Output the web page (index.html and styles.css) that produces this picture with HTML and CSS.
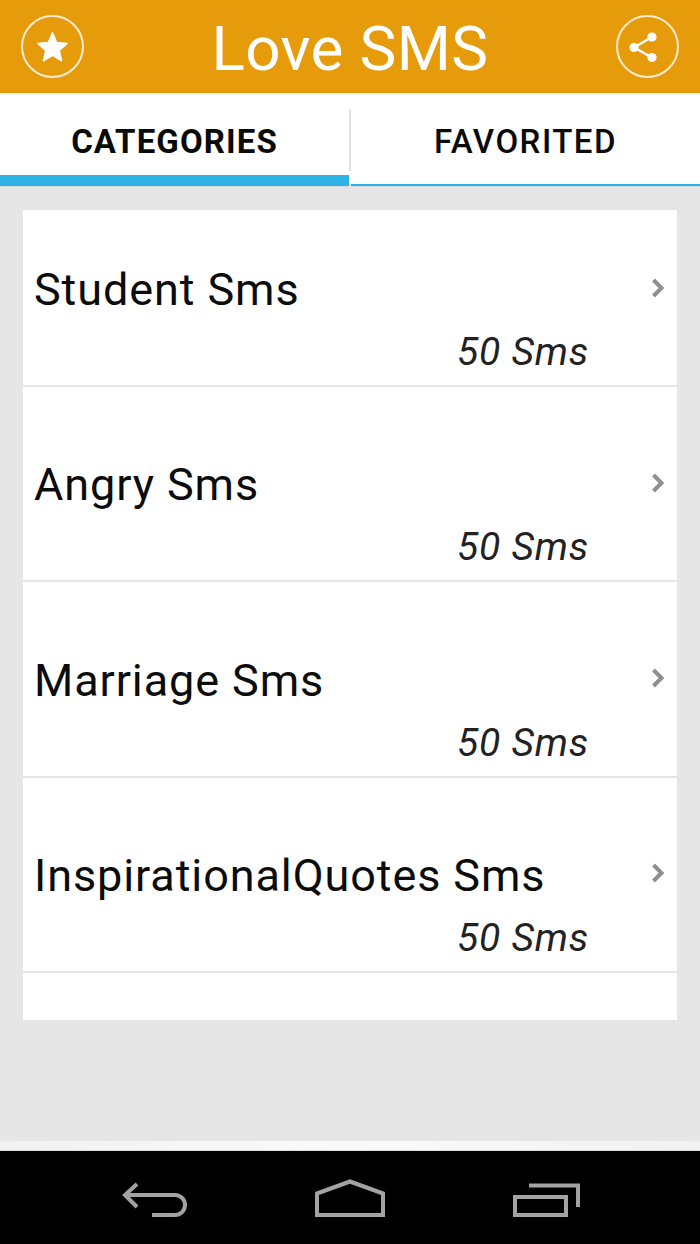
FILE: index.html
```html
<!DOCTYPE html>
<html lang="en">
<head>
<meta charset="utf-8">
<title>Love SMS</title>
<link rel="stylesheet" href="styles.css">
</head>
<body>
<div class="app">
  <header class="header">
    <button class="round-btn" aria-label="Favorites">
      <svg viewBox="0 0 63 63" width="63" height="63"><circle cx="31.500" cy="31.500" r="30.500" fill="none" stroke="#fbeccf" stroke-width="2"/><path d="M31.500 17.800L35.700 27.500 46.200 28.500 38.300 35.500 40.600 45.800 31.500 40.500 22.400 45.800 24.700 35.500 16.800 28.500 27.300 27.500z" fill="#fff" stroke="#fff" stroke-width="1.400" stroke-linejoin="round"/></svg>
    </button>
    <h1 class="title">Love SMS</h1>
    <button class="round-btn" aria-label="Share">
      <svg viewBox="0 0 63 63" width="63" height="63"><circle cx="31.500" cy="31.500" r="30.500" fill="none" stroke="#fbeccf" stroke-width="2"/><path d="M36 22 L18 32.500 L36 42.500" fill="none" stroke="#fff" stroke-width="2.500"/><circle cx="36" cy="22" r="4.600" fill="#fff"/><circle cx="18" cy="32.500" r="4.600" fill="#fff"/><circle cx="36" cy="42.500" r="4.600" fill="#fff"/></svg>
    </button>
  </header>
  <nav class="tabs">
    <div class="tab tab-active"><span>CATEGORIES</span></div>
    <div class="tab-sep"></div>
    <div class="tab"><span>FAVORITED</span></div>
  </nav>
  <main class="content">
    <ul class="card">
      <li class="row"><div class="row-top"><span class="row-title">Student Sms</span><svg class="chev" viewBox="0 0 14 20" width="14" height="20"><path d="M2.500 2L10.500 10 2.500 18" fill="none" stroke="#8f8f8f" stroke-width="4"/></svg></div><div class="row-count">50 Sms</div></li>
      <li class="row"><div class="row-top"><span class="row-title">Angry Sms</span><svg class="chev" viewBox="0 0 14 20" width="14" height="20"><path d="M2.500 2L10.500 10 2.500 18" fill="none" stroke="#8f8f8f" stroke-width="4"/></svg></div><div class="row-count">50 Sms</div></li>
      <li class="row"><div class="row-top"><span class="row-title">Marriage Sms</span><svg class="chev" viewBox="0 0 14 20" width="14" height="20"><path d="M2.500 2L10.500 10 2.500 18" fill="none" stroke="#8f8f8f" stroke-width="4"/></svg></div><div class="row-count">50 Sms</div></li>
      <li class="row"><div class="row-top"><span class="row-title">InspirationalQuotes Sms</span><svg class="chev" viewBox="0 0 14 20" width="14" height="20"><path d="M2.500 2L10.500 10 2.500 18" fill="none" stroke="#8f8f8f" stroke-width="4"/></svg></div><div class="row-count">50 Sms</div></li>
    </ul>
  </main>
  <div class="glow"></div>
  <footer class="navbar">
    <svg class="nav-icon" viewBox="0 0 70 40" width="70" height="40"><path d="M17 5 L5 16 L17 28 M5 16 H55 A10 10 0 0 1 55 36 H32" fill="none" stroke="#a3a3a3" stroke-width="4"/></svg>
    <svg class="nav-icon" viewBox="0 0 70 40" width="70" height="40"><path d="M2 14.500 L35 2.500 L68 14.500 V36 H2 Z" fill="none" stroke="#a3a3a3" stroke-width="4"/></svg>
    <svg class="nav-icon" viewBox="0 0 70 40" width="70" height="40"><path d="M5 18 H56 V36 H5 Z" fill="none" stroke="#a3a3a3" stroke-width="4"/><path d="M19 6.500 H68 V28" fill="none" stroke="#a3a3a3" stroke-width="4"/></svg>
  </footer>
</div>
</body>
</html>
```
FILE: styles.css
```css
* { box-sizing: border-box; }
html, body { margin: 0; padding: 0; }
body { font-family: Roboto, "Liberation Sans", sans-serif; background: #e6e6e6; }
.app { width: 700px; height: 1244px; display: flex; flex-direction: column; overflow: hidden; }
.header { height: 93px; background: #e59b0a; display: flex; align-items: center; justify-content: space-between; padding: 0 21px; flex: none; }
.round-btn { width: 63px; height: 63px; padding: 0; border: 0; background: none; display: block; }
.round-btn svg { display: block; }
.title { margin: 0; color: #fff; font-weight: 400; font-size: 62px; line-height: 93px; letter-spacing: 0.4px; padding-top: 4px; }
.tabs { height: 94px; background: #fff; display: flex; flex: none; border-top: 1px solid #f6f3ee; border-bottom: 1px solid #d9dcdd; }
.tab { flex: 1; height: 92px; border-bottom: 2px solid #2fb3e6; display: flex; justify-content: center; padding-top: 26px; font-weight: 500; font-size: 33px; line-height: 44px; letter-spacing: 1.5px; color: #0a0a0a; }
.tab-active { border-bottom: 11px solid #2fb3e6; font-weight: 700; letter-spacing: 1.1px; }
.tab-sep { width: 2px; height: 62px; margin-top: 15px; background: #e0e0e0; flex: none; }
.content { flex: 1; padding: 23px 23px 0; min-height: 0; }
.card { list-style: none; margin: 0; padding: 0 0 47px; background: #fff; }
.row { height: 195.33px; border-bottom: 2px solid #e6e6e6; padding: 0 12px; display: flex; flex-direction: column; justify-content: flex-end; }
.row:first-child { height: 177px; }
.row-top { display: flex; justify-content: space-between; align-items: center; height: 52px; margin-bottom: 14px; }
.row-title { font-size: 45px; line-height: 52px; color: #0c0c0c; letter-spacing: 0.9px; margin-left: -1px; }
.chev { margin-top: -5px; }
.row-count { font-size: 39px; line-height: 44px; font-style: italic; color: #222; text-align: right; padding-right: 76px; margin-bottom: 11px; letter-spacing: 0.8px; }
.glow { height: 10px; flex: none; background: linear-gradient(to right, #f1f1f1, #fafafa 50%, #f1f1f1); border-bottom: 1px solid #dcdcdc; }
.navbar { height: 93px; flex: none; background: #000; display: flex; justify-content: space-between; align-items: flex-start; padding: 28px 120px 0; }
.nav-icon { display: block; }
```
